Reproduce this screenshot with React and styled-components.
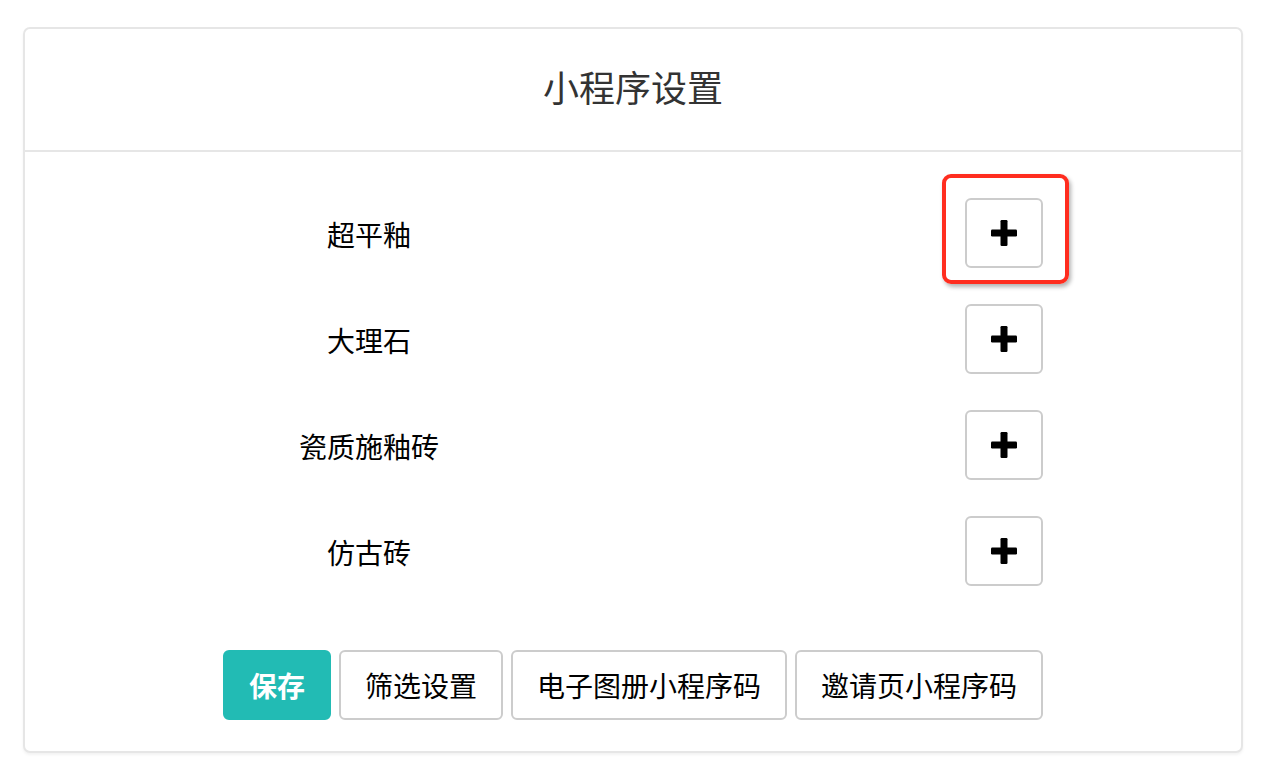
import styled, { createGlobalStyle } from 'styled-components';

const GlobalStyle = createGlobalStyle`
  *, *::before, *::after {
    box-sizing: border-box;
  }
  body {
    margin: 0;
    background: #ffffff;
    font-family: "Noto Sans CJK SC", "Noto Sans", sans-serif;
    color: #000000;
  }
`;

const Page = styled.div`
  padding: 27px 29px 20px 23px;
`;

const Card = styled.div`
  border: 2px solid #e6e6e6;
  border-radius: 7px;
  background: #ffffff;
  box-shadow: 0 2px 3px rgba(0, 0, 0, 0.05);
  height: 726px;
  display: flex;
  flex-direction: column;
`;

const Header = styled.div`
  height: 123px;
  border-bottom: 2px solid #e6e6e6;
  display: flex;
  align-items: center;
  justify-content: center;
`;

const Title = styled.h2`
  margin: 0 0 8px;
  font-size: 36px;
  font-weight: 400;
  color: #333333;
`;

const Body = styled.div`
  flex: 1;
  display: flex;
  flex-direction: column;
  padding: 46px 0 0;
`;

const List = styled.div`
  display: flex;
  flex-direction: column;
  gap: 36px;
`;

const Row = styled.div`
  display: grid;
  grid-template-columns: 686px 78px;
  column-gap: 254px;
  align-items: center;
`;

const Label = styled.div`
  text-align: center;
  font-size: 28px;
  color: #000000;
  padding: 2px 0 0 2px;
`;

const AddWrap = styled.div`
  position: relative;
  width: 78px;
  height: 70px;

  ${props => props.$highlight && `
    &::after {
      content: '';
      position: absolute;
      left: -23px;
      top: -24px;
      width: 127px;
      height: 110px;
      border: 4px solid #ff2d1f;
      border-radius: 9px;
      box-shadow: 2px 3px 4px rgba(0, 0, 0, 0.3);
      pointer-events: none;
    }
  `}
`;

const AddButton = styled.button`
  width: 78px;
  height: 70px;
  border: 2px solid #cccccc;
  border-radius: 6px;
  background: #ffffff;
  display: flex;
  align-items: center;
  justify-content: center;
  padding: 0;
  cursor: pointer;
`;

const Actions = styled.div`
  margin-top: 64px;
  display: flex;
  justify-content: center;
  gap: 8px;
`;

const ActionButton = styled.button`
  height: 70px;
  padding: 0 24px;
  font-family: "Noto Sans CJK SC", "Noto Sans", sans-serif;
  font-size: 28px;
  font-weight: ${props => (props.$primary ? 700 : 400)};
  color: ${props => (props.$primary ? '#ffffff' : '#000000')};
  background: ${props => (props.$primary ? '#22bbb4' : '#ffffff')};
  border: 2px solid ${props => (props.$primary ? '#22bbb4' : '#cccccc')};
  border-radius: 6px;
  cursor: pointer;
  line-height: 1;
`;

const PlusIcon = () => (
  <svg width="26" height="26" viewBox="0 0 26 26">
    <rect x="9.5" y="0" width="7" height="26" rx="1.2" fill="#000" />
    <rect x="0" y="9.5" width="26" height="7" rx="1.2" fill="#000" />
  </svg>
);

const categories = ['超平釉', '大理石', '瓷质施釉砖', '仿古砖'];

export default function App() {
  return (
    <>
      <GlobalStyle />
      <Page>
        <Card>
          <Header>
            <Title>小程序设置</Title>
          </Header>
          <Body>
            <List>
              {categories.map((name, i) => (
                <Row key={name}>
                  <Label>{name}</Label>
                  <AddWrap $highlight={i === 0}>
                    <AddButton title="添加">
                      <PlusIcon />
                    </AddButton>
                  </AddWrap>
                </Row>
              ))}
            </List>
            <Actions>
              <ActionButton $primary>保存</ActionButton>
              <ActionButton>筛选设置</ActionButton>
              <ActionButton>电子图册小程序码</ActionButton>
              <ActionButton>邀请页小程序码</ActionButton>
            </Actions>
          </Body>
        </Card>
      </Page>
    </>
  );
}
